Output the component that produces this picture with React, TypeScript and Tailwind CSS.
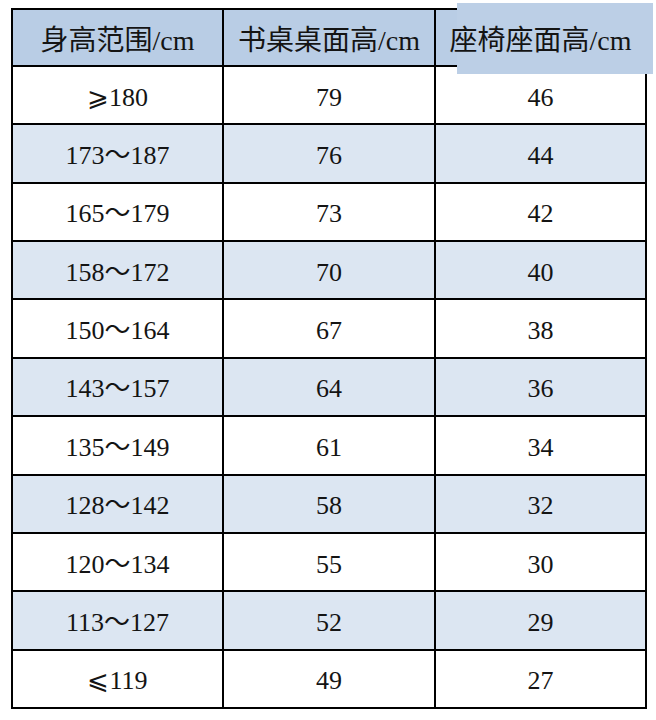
import React from "react";

const rows: [string, string, string][] = [
  ["⩾180", "79", "46"],
  ["173～187", "76", "44"],
  ["165～179", "73", "42"],
  ["158～172", "70", "40"],
  ["150～164", "67", "38"],
  ["143～157", "64", "36"],
  ["135～149", "61", "34"],
  ["128～142", "58", "32"],
  ["120～134", "55", "30"],
  ["113～127", "52", "29"],
  ["⩽119", "49", "27"],
];

const font = { fontFamily: '"Liberation Serif", "Noto Sans CJK SC", "DejaVu Serif", serif' };

export default function App() {
  return (
    <div className="w-[656px] h-[720px] bg-white overflow-hidden" style={font}>
      <div className="ml-[11px] mt-[8px] w-[636px] h-[701px] bg-black p-[2px] grid grid-cols-[209px_210px_209px] grid-rows-[55px_repeat(11,1fr)] gap-[2px] text-[#141414]">
        <div className="bg-[#b9cde5] flex items-center justify-center pt-[6px] text-[28px] leading-none">
          身高范围/cm
        </div>
        <div className="bg-[#b9cde5] flex items-center justify-center pt-[6px] text-[28px] leading-none">
          书桌桌面高/cm
        </div>
        <div className="relative bg-[#b9cde5] flex items-center justify-center pt-[6px] text-[28px] leading-none">
          <div className="absolute left-[21px] top-[-7px] w-[196px] h-[71px] bg-[#bccfe6]" />
          <span className="relative">座椅座面高/cm</span>
        </div>
        {rows.map((r, i) => {
          const bg = i % 2 === 1 ? "bg-[#dce6f2]" : "bg-white";
          return (
            <React.Fragment key={i}>
              {r.map((c, j) => (
                <div
                  key={j}
                  className={`${bg} flex items-center justify-center pt-[5px] text-[26px] leading-none`}
                >
                  {c}
                </div>
              ))}
            </React.Fragment>
          );
        })}
      </div>
    </div>
  );
}
